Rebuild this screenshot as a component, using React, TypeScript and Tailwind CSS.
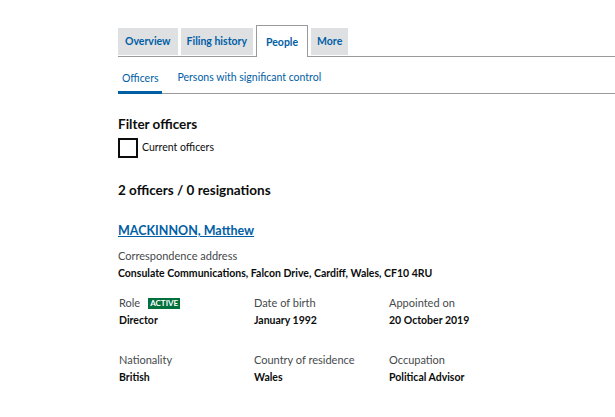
export default function App() {
  const font = { fontFamily: "Lato, 'Liberation Sans', sans-serif" };
  return (
    <div className="w-[615px] h-[417px] overflow-hidden bg-white text-[#0b0c0c]" style={font}>
      <div className="pl-[118px]">
        {/* Tabs */}
        <div className="mt-[26px] flex items-end gap-[3px] border-b border-[#9a9a9a] h-[31px]">
          <div className="h-[27px] px-[7px] pt-[1px] bg-[#dee0e2] flex items-center text-[10.5px] font-bold text-[#005ea5] mb-[1px]">Overview</div>
          <div className="h-[27px] px-[6px] pt-[1px] bg-[#dee0e2] flex items-center text-[10.5px] font-bold text-[#005ea5] mb-[1px]">Filing history</div>
          <div className="h-[32px] px-[9px] pt-[2px] bg-white border border-b-0 border-[#9a9a9a] -mb-[1px] flex items-center text-[10.5px] font-bold text-[#005ea5]">People</div>
          <div className="h-[27px] px-[6px] pt-[1px] bg-[#dee0e2] flex items-center text-[10.5px] font-bold text-[#005ea5] mb-[1px]">More</div>
        </div>

        {/* Sub tabs */}
        <div className="flex items-end h-[37px] border-b border-[#9a9a9a]">
          <div className="px-[4px] pb-[4px] border-b-[3px] border-[#005ea5] -mb-[1px] text-[10.5px] text-[#005ea5]">Officers</div>
          <div className="ml-[15px] pb-[7px] text-[10.5px] text-[#005ea5]">Persons with significant control</div>
        </div>

        {/* Filter */}
        <div className="mt-[22px] text-[13.5px] font-bold leading-[16px]">Filter officers</div>
        <div className="mt-[6px] flex items-center gap-[4px]">
          <div className="w-[20px] h-[20px] border-2 border-[#0b0c0c]"></div>
          <span className="text-[10.5px]">Current officers</span>
        </div>

        <div className="mt-[24px] text-[13.5px] font-bold leading-[16px]">2 officers / 0 resignations</div>

        {/* Officer */}
        <div className="mt-[19px]">
          <a className="text-[12.5px] font-bold text-[#005ea5] underline leading-[16px]">MACKINNON, Matthew</a>
        </div>
        <div className="mt-[8px] text-[11px] leading-[14px] text-[#454a4c]">Correspondence address</div>
        <div className="mt-[3px] text-[10.5px] leading-[14px] font-bold">
          Consulate Communications, Falcon Drive, Cardiff, Wales, CF10 4RU
        </div>

        <div className="mt-[16px] grid grid-cols-[135px_135px_135px] pl-[1px]">
          <div>
            <div className="flex items-center gap-[8px] text-[11px] leading-[14px] text-[#454a4c]">
              Role
              <span className="bg-[#00703c] text-white text-[8px] font-bold px-[2px] leading-[11px]">ACTIVE</span>
            </div>
            <div className="mt-[3px] text-[10.5px] leading-[14px] font-bold">Director</div>
          </div>
          <div>
            <div className="text-[11px] leading-[14px] text-[#454a4c]">Date of birth</div>
            <div className="mt-[3px] text-[10.5px] leading-[14px] font-bold">January 1992</div>
          </div>
          <div>
            <div className="text-[11px] leading-[14px] text-[#454a4c]">Appointed on</div>
            <div className="mt-[3px] text-[10.5px] leading-[14px] font-bold">20 October 2019</div>
          </div>
        </div>

        <div className="mt-[26px] grid grid-cols-[135px_135px_135px] pl-[1px]">
          <div>
            <div className="text-[11px] leading-[14px] text-[#454a4c]">Nationality</div>
            <div className="mt-[3px] text-[10.5px] leading-[14px] font-bold">British</div>
          </div>
          <div>
            <div className="text-[11px] leading-[14px] text-[#454a4c]">Country of residence</div>
            <div className="mt-[3px] text-[10.5px] leading-[14px] font-bold">Wales</div>
          </div>
          <div>
            <div className="text-[11px] leading-[14px] text-[#454a4c]">Occupation</div>
            <div className="mt-[3px] text-[10.5px] leading-[14px] font-bold">Political Advisor</div>
          </div>
        </div>
      </div>
    </div>
  );
}
